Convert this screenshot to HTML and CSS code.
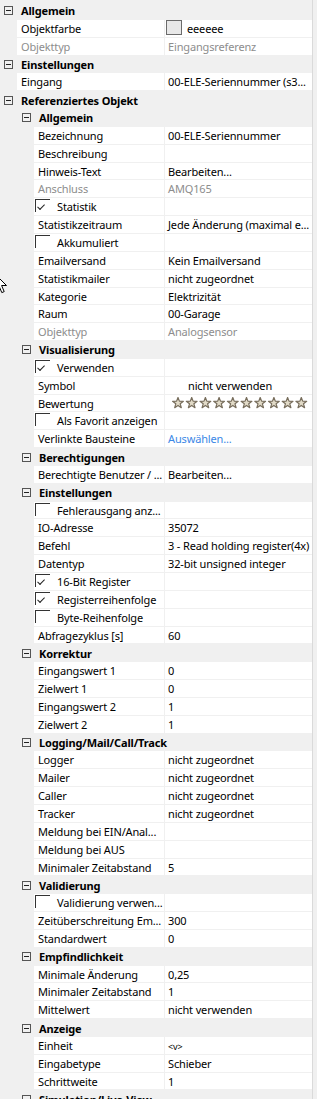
FILE: index.html
```html
<!DOCTYPE html>
<html lang="de">
<head>
    <meta charset="UTF-8">
    <meta name="viewport" content="width=device-width, initial-scale=1.0">
    <title>Eigenschaften</title>
    <link rel="stylesheet" href="styles.css">
</head>
<body>
    <div class="grid">
        <div class="cat"><span class="toggle"></span>Allgemein</div>
        <div class="row l1"><div class="name">Objektfarbe</div><div class="val"><span class="swatch"></span>eeeeee</div></div>
        <div class="row l1 ro"><div class="name">Objekttyp</div><div class="val">Eingangsreferenz</div></div>
        <div class="cat"><span class="toggle"></span>Einstellungen</div>
        <div class="row l1"><div class="name">Eingang</div><div class="val">00-ELE-Seriennummer (s3...</div></div>
        <div class="cat"><span class="toggle"></span>Referenziertes Objekt</div>

        <div class="cat c1"><span class="toggle"></span>Allgemein</div>
        <div class="row l2"><div class="name">Bezeichnung</div><div class="val">00-ELE-Seriennummer</div></div>
        <div class="row l2"><div class="name">Beschreibung</div><div class="val"></div></div>
        <div class="row l2"><div class="name">Hinweis-Text</div><div class="val">Bearbeiten...</div></div>
        <div class="row l2 ro"><div class="name">Anschluss</div><div class="val">AMQ165</div></div>
        <div class="row l2"><div class="name chk"><span class="check on"></span>Statistik</div><div class="val"></div></div>
        <div class="row l2"><div class="name">Statistikzeitraum</div><div class="val">Jede Änderung (maximal e...</div></div>
        <div class="row l2"><div class="name chk"><span class="check"></span>Akkumuliert</div><div class="val"></div></div>
        <div class="row l2"><div class="name">Emailversand</div><div class="val">Kein Emailversand</div></div>
        <div class="row l2"><div class="name">Statistikmailer</div><div class="val">nicht zugeordnet</div></div>
        <div class="row l2"><div class="name">Kategorie</div><div class="val">Elektrizität</div></div>
        <div class="row l2"><div class="name">Raum</div><div class="val">00-Garage</div></div>
        <div class="row l2 ro"><div class="name">Objekttyp</div><div class="val">Analogsensor</div></div>

        <div class="cat c1"><span class="toggle"></span>Visualisierung</div>
        <div class="row l2"><div class="name chk"><span class="check on"></span>Verwenden</div><div class="val"></div></div>
        <div class="row l2"><div class="name">Symbol</div><div class="val symbol">nicht verwenden</div></div>
        <div class="row l2"><div class="name">Bewertung</div><div class="val stars">
            <svg width="140" height="12" viewBox="0 0 140 12">
                <defs>
                    <polygon id="star" points="6,0.5 7.4,4.1 11.4,4.3 8.2,6.8 9.3,10.7 6,8.4 2.7,10.7 3.8,6.8 0.6,4.3 4.6,4.1"/>
                </defs>
                <g class="star-row">
                    <use href="#star" x="0"/>
                    <use href="#star" x="13.7"/>
                    <use href="#star" x="27.4"/>
                    <use href="#star" x="41.1"/>
                    <use href="#star" x="54.8"/>
                    <use href="#star" x="68.5"/>
                    <use href="#star" x="82.2"/>
                    <use href="#star" x="95.9"/>
                    <use href="#star" x="109.6"/>
                    <use href="#star" x="123.3"/>
                </g>
            </svg>
        </div></div>
        <div class="row l2"><div class="name chk"><span class="check"></span>Als Favorit anzeigen</div><div class="val"></div></div>
        <div class="row l2"><div class="name">Verlinkte Bausteine</div><div class="val link">Auswählen...</div></div>

        <div class="cat c1"><span class="toggle"></span>Berechtigungen</div>
        <div class="row l2"><div class="name">Berechtigte Benutzer / ...</div><div class="val">Bearbeiten...</div></div>

        <div class="cat c1"><span class="toggle"></span>Einstellungen</div>
        <div class="row l2"><div class="name chk"><span class="check"></span>Fehlerausgang anz...</div><div class="val"></div></div>
        <div class="row l2"><div class="name">IO-Adresse</div><div class="val">35072</div></div>
        <div class="row l2"><div class="name">Befehl</div><div class="val">3 - Read holding register(4x)</div></div>
        <div class="row l2"><div class="name">Datentyp</div><div class="val">32-bit unsigned integer</div></div>
        <div class="row l2"><div class="name chk"><span class="check on"></span>16-Bit Register</div><div class="val"></div></div>
        <div class="row l2"><div class="name chk"><span class="check on"></span>Registerreihenfolge</div><div class="val"></div></div>
        <div class="row l2"><div class="name chk"><span class="check"></span>Byte-Reihenfolge</div><div class="val"></div></div>
        <div class="row l2"><div class="name">Abfragezyklus [s]</div><div class="val">60</div></div>

        <div class="cat c1"><span class="toggle"></span>Korrektur</div>
        <div class="row l2"><div class="name">Eingangswert 1</div><div class="val">0</div></div>
        <div class="row l2"><div class="name">Zielwert 1</div><div class="val">0</div></div>
        <div class="row l2"><div class="name">Eingangswert 2</div><div class="val">1</div></div>
        <div class="row l2"><div class="name">Zielwert 2</div><div class="val">1</div></div>

        <div class="cat c1"><span class="toggle"></span>Logging/Mail/Call/Track</div>
        <div class="row l2"><div class="name">Logger</div><div class="val">nicht zugeordnet</div></div>
        <div class="row l2"><div class="name">Mailer</div><div class="val">nicht zugeordnet</div></div>
        <div class="row l2"><div class="name">Caller</div><div class="val">nicht zugeordnet</div></div>
        <div class="row l2"><div class="name">Tracker</div><div class="val">nicht zugeordnet</div></div>
        <div class="row l2"><div class="name">Meldung bei EIN/Anal...</div><div class="val"></div></div>
        <div class="row l2"><div class="name">Meldung bei AUS</div><div class="val"></div></div>
        <div class="row l2"><div class="name">Minimaler Zeitabstand</div><div class="val">5</div></div>

        <div class="cat c1"><span class="toggle"></span>Validierung</div>
        <div class="row l2"><div class="name chk"><span class="check"></span>Validierung verwen...</div><div class="val"></div></div>
        <div class="row l2"><div class="name">Zeitüberschreitung Em...</div><div class="val">300</div></div>
        <div class="row l2"><div class="name">Standardwert</div><div class="val">0</div></div>

        <div class="cat c1"><span class="toggle"></span>Empfindlichkeit</div>
        <div class="row l2"><div class="name">Minimale Änderung</div><div class="val">0,25</div></div>
        <div class="row l2"><div class="name">Minimaler Zeitabstand</div><div class="val">1</div></div>
        <div class="row l2"><div class="name">Mittelwert</div><div class="val">nicht verwenden</div></div>

        <div class="cat c1"><span class="toggle"></span>Anzeige</div>
        <div class="row l2"><div class="name">Einheit</div><div class="val"><span class="unit">&lt;v&gt;</span></div></div>
        <div class="row l2"><div class="name">Eingabetype</div><div class="val">Schieber</div></div>
        <div class="row l2"><div class="name">Schrittweite</div><div class="val">1</div></div>

        <div class="cat c1"><span class="toggle"></span>Simulation/Live-View</div>

        <svg class="cursor" width="13" height="20" viewBox="0 0 13 20">
            <path d="M0.5,0.5 L0.5,16 L4.2,12.4 L6.8,18.6 L9.2,17.6 L6.6,11.5 L11.5,11.5 Z" fill="#fff" stroke="#000" stroke-width="1"/>
        </svg>
    </div>
</body>
</html>
```

FILE: styles.css
```css
body {
    margin: 0;
    background-color: #f0f0f0;
    color: #000;
    font-family: "Noto Sans", sans-serif;
    font-size: 11px;
    letter-spacing: -0.15px;
}
.grid {
    position: relative;
    width: 313px;
    height: 1099px;
    padding-top: 2px;
    box-sizing: border-box;
    border-right: 1px solid #dadada;
    overflow: hidden;
}
.cat {
    display: flex;
    align-items: center;
    height: 17.85px;
    font-weight: bold;
    white-space: nowrap;
}
.toggle {
    position: relative;
    width: 9px;
    height: 9px;
    box-sizing: border-box;
    border: 1px solid #555;
    margin: 0 8px 0 4px;
    flex: none;
}
.toggle::after {
    content: '';
    position: absolute;
    left: 1px;
    right: 1px;
    top: 3px;
    height: 1px;
    background-color: #222;
}
.c1 .toggle {
    margin-left: 22px;
}
.row {
    display: flex;
    height: 17.85px;
    line-height: 17px;
}
.row.l1 {
    padding-left: 17px;
}
.row.l2 {
    padding-left: 34px;
}
.name {
    background-color: #fff;
    margin-bottom: 1px;
    padding-left: 4px;
    box-sizing: border-box;
    white-space: nowrap;
    overflow: hidden;
}
.l1 .name {
    width: 147px;
}
.l2 .name {
    width: 130px;
}
.name.chk {
    display: flex;
    padding-left: 1px;
}
.check {
    position: relative;
    width: 15px;
    height: 13px;
    margin-top: 1px;
    margin-right: 7px;
    box-sizing: border-box;
    border-left: 1px solid #333;
    border-top: 1px solid #333;
    flex: none;
}
.check.on::after {
    content: '';
    position: absolute;
    left: 4px;
    top: 6px;
    width: 6px;
    height: 3px;
    border-left: 1px solid #222;
    border-bottom: 1px solid #222;
    transform: rotate(-45deg);
    transform-origin: left bottom;
}
.val {
    flex: 1;
    background-color: #fff;
    margin: 0 0 1px 1px;
    padding-left: 3px;
    white-space: nowrap;
    overflow: hidden;
}
.ro .name,
.ro .val {
    color: #8d8d8d;
}
.swatch {
    display: inline-block;
    width: 16px;
    height: 15px;
    box-sizing: border-box;
    border: 1px solid #6b6b6b;
    background-color: #e8e8e8;
    vertical-align: top;
    margin: 0 5px 0 -2px;
}
.symbol {
    padding-left: 23px;
}
.stars {
    padding-left: 7px;
    display: flex;
    align-items: center;
}
.star-row {
    fill: #e2dbc8;
    stroke: #776d5c;
    stroke-width: 1.2;
    stroke-linejoin: round;
}
.link {
    color: #3b87e6;
}
.unit {
    font-size: 9px;
}
.cursor {
    position: absolute;
    left: -5px;
    top: 274px;
}
```
